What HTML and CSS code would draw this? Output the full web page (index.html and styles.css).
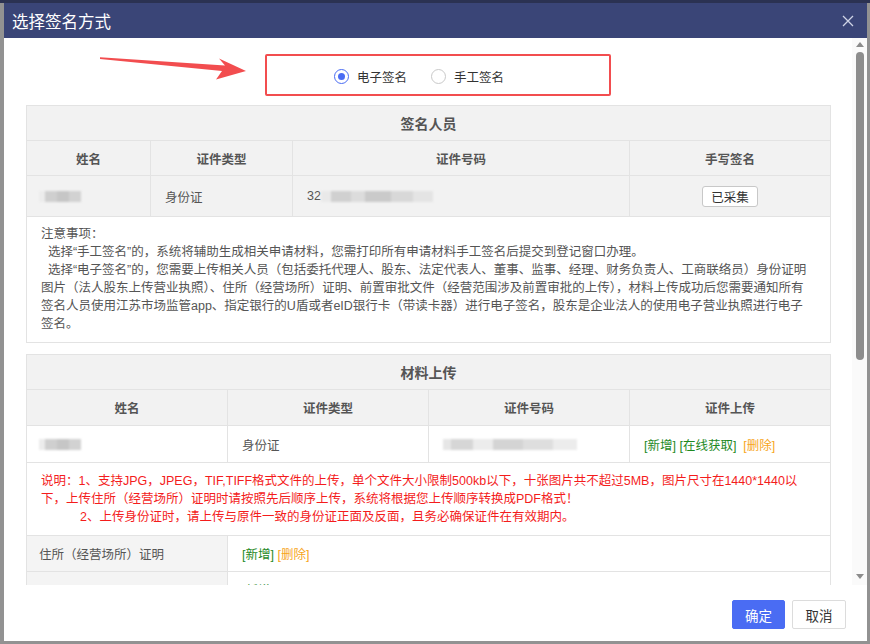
FILE: index.html
```html
<!DOCTYPE html>
<html lang="zh-CN">
<head>
  <meta charset="UTF-8" />
  <title>选择签名方式</title>
  <link rel="stylesheet" href="styles.css">
</head>
<body>
  <div class="modal">
    <div class="modal-head">
      <span class="modal-title">选择签名方式</span>
      <svg class="close" width="12" height="12" viewBox="0 0 12 12"><path d="M1 1L11 11M11 1L1 11" stroke="#cfd4e6" stroke-width="1.3" fill="none"/></svg>
    </div>

    <div class="modal-main">
      <div class="scroll-pane">
        <div class="sign-type">
          <label class="radio checked"><span class="dot"></span>电子签名</label>
          <label class="radio"><span class="dot"></span>手工签名</label>
        </div>

        <table class="tbl">
          <colgroup><col style="width:124px"><col style="width:142px"><col style="width:337px"><col style="width:201px"></colgroup>
          <tr class="row-title"><th colspan="4">签名人员</th></tr>
          <tr class="row-head"><th>姓名</th><th>证件类型</th><th>证件号码</th><th>手写签名</th></tr>
          <tr class="row-data gray">
            <td><span class="blur blur-name"></span></td>
            <td>身份证</td>
            <td>32<span class="blur blur-id"></span></td>
            <td class="center"><button class="btn-small">已采集</button></td>
          </tr>
          <tr>
            <td colspan="4" class="notes">
              注意事项：<br>
              &nbsp;&nbsp;选择“手工签名”的，系统将辅助生成相关申请材料，您需打印所有申请材料手工签名后提交到登记窗口办理。<br>
              &nbsp;&nbsp;选择“电子签名”的，您需要上传相关人员（包括委托代理人、股东、法定代表人、董事、监事、经理、财务负责人、工商联络员）身份证明图片（法人股东上传营业执照）、住所（经营场所）证明、前置审批文件（经营范围涉及前置审批的上传），材料上传成功后您需要通知所有签名人员使用江苏市场监管app、指定银行的U盾或者eID银行卡（带读卡器）进行电子签名，股东是企业法人的使用电子营业执照进行电子签名。
            </td>
          </tr>
        </table>

        <table class="tbl second">
          <colgroup><col style="width:201px"><col style="width:201px"><col style="width:201px"><col style="width:201px"></colgroup>
          <tr class="row-title"><th colspan="4">材料上传</th></tr>
          <tr class="row-head short"><th>姓名</th><th>证件类型</th><th>证件号码</th><th>证件上传</th></tr>
          <tr class="row-data short">
            <td><span class="blur blur-name"></span></td>
            <td>身份证</td>
            <td><span class="blur blur-id2"></span></td>
            <td class="links"><a class="add">[新增]</a> <a class="add">[在线获取]</a>&nbsp; <a class="del">[删除]</a></td>
          </tr>
          <tr>
            <td colspan="4" class="notes red">
              说明：1、支持JPG，JPEG，TIF,TIFF格式文件的上传，单个文件大小限制500kb以下，十张图片共不超过5MB，图片尺寸在1440*1440以下，上传住所（经营场所）证明时请按照先后顺序上传，系统将根据您上传顺序转换成PDF格式！<br>
              <span class="indent">2、上传身份证时，请上传与原件一致的身份证正面及反面，且务必确保证件在有效期内。</span>
            </td>
          </tr>
          <tr class="row-file">
            <td class="label">住所（经营场所）证明</td>
            <td colspan="3" class="links"><a class="add">[新增]</a> <a class="del">[删除]</a></td>
          </tr>
          <tr class="row-file">
            <td class="label"></td>
            <td colspan="3" class="links"><a class="add">[新增]</a></td>
          </tr>
        </table>
      </div>

      <div class="scrollbar">
        <span class="arr up"></span>
        <span class="thumb"></span>
        <span class="arr down"></span>
      </div>
    </div>

    <div class="modal-foot">
      <button class="btn primary">确定</button>
      <button class="btn">取消</button>
    </div>

    <div class="mark-box"></div>
    <svg class="mark-arrow" width="160" height="30" viewBox="95 52 160 30">
      <polygon points="100,57.2 225,65.5 219,58.5 246,71 216,79.5 222,71 100,59" fill="#f24d4f"/>
    </svg>
  </div>
</body>
</html>
```

FILE: styles.css
```css
body {
  margin: 0;
  padding: 3px 3px 3px 4px;
  height: 644px;
  box-sizing: border-box;
  background: linear-gradient(#2b3252 0, #2b3252 3px, #929292 3px);
  font-family: "Liberation Sans", "Noto Sans CJK SC", sans-serif;
  overflow: hidden;
}
.modal {
  position: relative;
  width: 863px;
  height: 638px;
  background: #fff;
  display: flex;
  flex-direction: column;
}
.modal-head {
  height: 35px;
  background: #3a4577;
  display: flex;
  align-items: center;
  justify-content: space-between;
  padding: 0 13px 0 8px;
  flex-shrink: 0;
}
.modal-title {
  color: #fff;
  font-size: 16.5px;
}
.modal-main {
  height: 547px;
  display: flex;
  flex-shrink: 0;
}
.scroll-pane {
  width: 848px;
  padding: 0 22px;
  box-sizing: border-box;
  overflow: hidden;
}
.scrollbar {
  width: 15px;
  background: #fafafa;
  display: flex;
  flex-direction: column;
  align-items: center;
  padding: 4px 0 6px;
  box-sizing: border-box;
}
.arr {
  width: 0;
  height: 0;
  border-left: 4px solid transparent;
  border-right: 4px solid transparent;
}
.arr.up {
  border-bottom: 5px solid #8c8c8c;
}
.arr.down {
  margin-top: auto;
  border-top: 5px solid #8c8c8c;
}
.thumb {
  width: 8px;
  height: 308px;
  margin-top: 5px;
  background: #8d8d8d;
  border-radius: 4px;
}
.sign-type {
  height: 67px;
  box-sizing: border-box;
  padding: 30px 18px 0 0;
  display: flex;
  justify-content: center;
  gap: 24px;
}
.radio {
  display: flex;
  align-items: center;
  height: 16px;
  font-size: 12.5px;
  color: #333;
}
.radio .dot {
  width: 13px;
  height: 13px;
  border: 1.5px solid #c9c9c9;
  border-radius: 50%;
  margin-right: 8px;
  box-sizing: content-box;
  position: relative;
}
.radio.checked .dot {
  border-color: #4a6cf3;
}
.radio.checked .dot::after {
  content: "";
  position: absolute;
  left: 3px;
  top: 3px;
  width: 7px;
  height: 7px;
  border-radius: 50%;
  background: #4a6cf3;
}
.tbl {
  width: 804px;
  border-collapse: collapse;
  table-layout: fixed;
  font-size: 12.5px;
  color: #555;
}
.tbl.second {
  margin-top: 11px;
}
.tbl th, .tbl td {
  border: 1px solid #e3e3e3;
  padding: 0 12px;
  text-align: left;
}
.tbl th {
  background: #f2f2f2;
  text-align: center;
  font-weight: bold;
}
.row-title th {
  height: 34px;
  font-size: 14px;
}
.row-head th {
  height: 34px;
}
.row-head.short th {
  height: 35px;
}
.row-data td {
  height: 40px;
}
.row-data.short td {
  height: 36px;
}
.row-data td:nth-child(2), .row-data td:nth-child(3) {
  padding-left: 14px;
}
.row-data.gray td {
  background: #f2f2f2;
}
.center {
  text-align: center !important;
}
.blur {
  display: inline-block;
  height: 11px;
  vertical-align: middle;
  filter: blur(0.8px);
}
.blur-name {
  width: 42px;
  background: linear-gradient(90deg, #ececec 0 6px, #cfcfcf 6px 18px, #c6c6c6 18px 30px, #d2d2d2 30px);
}
.blur-id {
  width: 112px;
  background: linear-gradient(90deg, #e9e9e9 0 10px, #d0d0d0 10px 30px, #dcdcdc 30px 44px, #cacaca 44px 70px, #d8d8d8 70px 92px, #e4e4e4 92px);
}
.blur-id2 {
  width: 134px;
  background: linear-gradient(90deg, #e6e6e6 0 8px, #d6d6d6 8px 30px, #ececec 30px 50px, #d4d4d4 50px 80px, #dedede 80px 110px, #ececec 110px);
}
.btn-small {
  height: 21px;
  padding: 0 8px;
  font: 12.5px "Noto Sans CJK SC", sans-serif;
  color: #333;
  background: #fff;
  border: 1px solid #c8c8c8;
  border-radius: 3px;
}
.notes {
  padding: 8px 22px 9px 14px !important;
  line-height: 18px;
  background: #fff;
}
.notes.red {
  color: #f41c1c;
  padding-top: 9px !important;
}
.indent {
  padding-left: 39px;
}
.links {
  padding-left: 14px !important;
}
.links a {
  text-decoration: none;
}
.add {
  color: #1f8a1f;
}
.del {
  color: #f7a51a;
}
.row-file td {
  height: 35px;
}
.row-file .label {
  background: #f4f4f4;
}
.modal-foot {
  flex: 1;
  display: flex;
  justify-content: flex-end;
  align-items: flex-start;
  gap: 7px;
  padding: 15px 21px 0 0;
}
.btn {
  height: 29px;
  width: 54px;
  font: 13.5px "Noto Sans CJK SC", sans-serif;
  color: #333;
  background: #fff;
  border: 1px solid #dcdcdc;
  border-radius: 2px;
}
.btn.primary {
  width: 53px;
  background: #4a6cf3;
  border-color: #4a6cf3;
  color: #fff;
}
.mark-box {
  position: absolute;
  left: 261px;
  top: 51px;
  width: 342px;
  height: 38px;
  border: 2.5px solid #f24d4f;
  border-radius: 2px;
}
.mark-arrow {
  position: absolute;
  left: 91px;
  top: 49px;
}
```
